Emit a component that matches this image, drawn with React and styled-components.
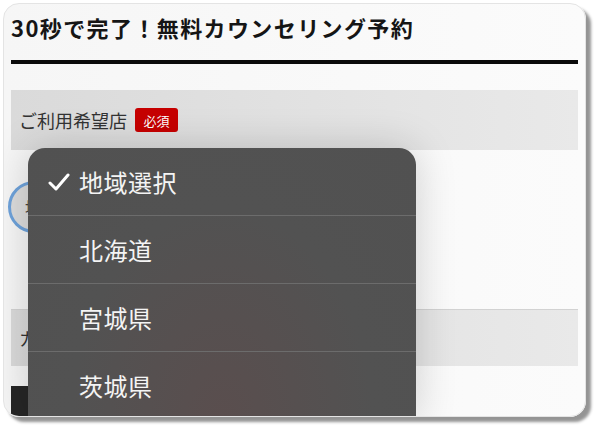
import React from 'react';
import styled, { createGlobalStyle } from 'styled-components';

const GlobalStyle = createGlobalStyle`
    html, body {
        margin: 0;
        padding: 0;
        background: #ffffff;
    }
    body {
        font-family: "Noto Sans CJK JP", "Noto Sans", sans-serif;
        color: #222;
    }
`;

const regions = ['地域選択', '北海道', '宮城県', '茨城県'];

const Check = () => (
    <svg width="22" height="20" viewBox="0 0 22 20">
        <path d="M2 11 L8 17 L20 3" fill="none" stroke="#fff" strokeWidth="3" strokeLinecap="round" strokeLinejoin="round" />
    </svg>
);

const App = () => {
    return (
        <Page>
            <GlobalStyle />
            <Card>
                <Title>30秒で完了！無料カウンセリング予約</Title>
                <Rule />
                <SectionHead>
                    ご利用希望店
                    <Badge>必須</Badge>
                </SectionHead>
                <SelectArea>
                    <SelectBox>地域選択</SelectBox>
                </SelectArea>
                <SectionHead $short>カウンセリング希望日</SectionHead>
                <DarkField />

                <Dropdown>
                    {regions.map((name, i) => (
                        <Option key={name}>
                            <CheckSlot>{i === 0 && <Check />}</CheckSlot>
                            {name}
                        </Option>
                    ))}
                </Dropdown>
            </Card>
        </Page>
    );
};

// Styled Components
const Page = styled.div`
    width: 600px;
    height: 432px;
    padding: 3px 0 0 3px;
    box-sizing: border-box;
`;

const Card = styled.div`
    position: relative;
    width: 583px;
    height: 414px;
    box-sizing: border-box;
    padding: 0 7px;
    border-radius: 16px;
    border: 1px solid #e4e4e4;
    background: linear-gradient(90deg, #f6f6f6, #fbfbfb);
    box-shadow: 5px 5px 3px rgba(0, 0, 0, 0.42);
    overflow: hidden;
    display: flex;
    flex-direction: column;
`;

const Title = styled.h1`
    margin: 0;
    padding: 8px 0 0 0;
    height: 56px;
    flex-shrink: 0;
    box-sizing: border-box;
    font-size: 22px;
    font-weight: 700;
    letter-spacing: 1.4px;
    line-height: 30px;
    color: #151515;
    white-space: nowrap;
`;

const Rule = styled.div`
    height: 4px;
    flex-shrink: 0;
    background: #0a0a0a;
`;

const SectionHead = styled.div`
    flex-shrink: 0;
    margin-top: ${p => (p.$short ? '0' : '26px')};
    height: ${p => (p.$short ? '57px' : '60px')};
    box-sizing: border-box;
    display: flex;
    align-items: center;
    gap: 8px;
    padding-left: 8px;
    font-size: 18px;
    color: #333;
    background: linear-gradient(90deg, #dadada, #e9e9e9);
    border-top: ${p => (p.$short ? '1px solid #d2d2d2' : 'none')};
`;

const Badge = styled.span`
    display: inline-flex;
    align-items: center;
    justify-content: center;
    width: 43px;
    height: 24px;
    border-radius: 3px;
    background: #c60000;
    color: #fff;
    font-size: 13px;
`;

const SelectArea = styled.div`
    flex-shrink: 0;
    height: 159px;
    box-sizing: border-box;
    padding-top: 31px;
`;

const SelectBox = styled.div`
    margin-left: -3px;
    width: 380px;
    height: 46px;
    border-radius: 26px;
    border: 3px solid #6ea2da;
    background: #dcdcdc;
    display: flex;
    align-items: center;
    padding-left: 14px;
    font-size: 16px;
    color: #444;
`;

const DarkField = styled.div`
    flex-shrink: 0;
    margin-top: 20px;
    width: 320px;
    height: 40px;
    background: #262626;
`;

const Dropdown = styled.div`
    position: absolute;
    left: 24px;
    top: 144px;
    width: 388px;
    border-radius: 17px 17px 0 0;
    background: radial-gradient(ellipse at 50% 100%, #5a4e4e 0%, #525252 55%, #515151 100%);
    box-shadow: 0 0 40px rgba(0, 0, 0, 0.18);
    overflow: hidden;
`;

const Option = styled.div`
    height: 68px;
    box-sizing: border-box;
    display: flex;
    align-items: center;
    border-bottom: 1px solid #6c6c6c;
    color: #f4f4f4;
    font-size: 24px;
    font-weight: 400;
    letter-spacing: 0.5px;
`;

const CheckSlot = styled.span`
    width: 51px;
    padding-left: 20px;
    box-sizing: border-box;
    display: flex;
    align-items: center;
`;

export default App;
